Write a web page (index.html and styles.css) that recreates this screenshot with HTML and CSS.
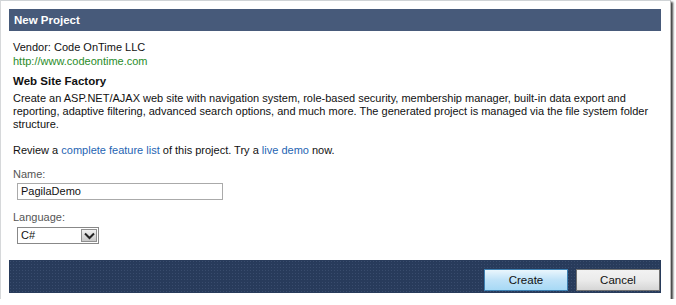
FILE: index.html
```html
<!DOCTYPE html>
<html>
<head>
<meta charset="utf-8">
<link rel="stylesheet" href="styles.css">
</head>
<body>
<div class="frame">
  <div class="titlebar">New Project</div>
  <div class="content">
    <div class="vendor">Vendor: Code OnTime LLC</div>
    <div class="url">http://www.codeontime.com</div>
    <div class="heading">Web Site Factory</div>
    <p class="desc">Create an ASP.NET/AJAX web site with navigation system, role-based security, membership manager, built-in data export and reporting, adaptive filtering, advanced search options, and much more. The generated project is managed via the file system folder structure.</p>
    <p class="review">Review a <span class="link">complete feature list</span> of this project. Try a <span class="link">live demo</span> now.</p>
    <div class="field">
      <div class="label">Name:</div>
      <div class="input">PagilaDemo</div>
    </div>
    <div class="field field-lang">
      <div class="label">Language:</div>
      <div class="select"><span class="sel-text">C#</span><span class="sel-btn"><svg width="11" height="8" viewBox="0 0 11 8"><path d="M1 1.5 L5.5 6 L10 1.5" fill="none" stroke="#222" stroke-width="2"/></svg></span></div>
    </div>
  </div>
  <div class="footer">
    <div class="btn btn-create">Create</div>
    <div class="btn btn-cancel">Cancel</div>
  </div>
</div>
</body>
</html>
```
FILE: styles.css
```css
html, body { margin: 0; padding: 0; background: #fff; }
body { font-family: Tahoma, "Liberation Sans", Arial, sans-serif; font-size: 11px; color: #111; }
.frame {
  width: 652px;
  border-top: 1px solid #cfd3d6;
  border-left: 1px solid #d6d8da;
  border-right: 1px solid #bbb;
  padding: 8px 9px 6px 8px;
  box-shadow: 2px 2px 2px rgba(0,0,0,0.75);
  background: #fff;
}
.titlebar {
  height: 22px;
  background: #475a7a;
  color: #fff;
  font-weight: bold;
  font-size: 11.5px;
  line-height: 22px;
  padding-left: 5px;
}
.content { padding: 9px 4px 0 4px; }
.vendor { line-height: 14px; }
.url { color: #2a8c2a; line-height: 14px; }
.heading { font-weight: bold; font-size: 11.5px; margin-top: 6px; line-height: 14px; }
.desc { margin: 4px 0 0 0; line-height: 13px; }
.review { margin: 13px 0 0 0; line-height: 13px; }
.link { color: #1f65b3; }
.field { margin-top: 11px; }
.label { color: #555; line-height: 13px; }
.input {
  margin-top: 2px;
  margin-left: 4px;
  width: 201px;
  height: 15px;
  border: 1px solid #aaa;
  line-height: 15px;
  padding-left: 3px;
  box-sizing: content-box;
}
.field-lang .label { margin-bottom: 3px; }
.select {
  margin-left: 4px;
  width: 80px;
  height: 15px;
  border: 1px solid #888;
  display: flex;
}
.sel-text { flex: 1; padding-left: 3px; line-height: 15px; }
.sel-btn {
  width: 16px;
  height: 13px;
  margin: 1px;
  background: linear-gradient(#f0f0f0, #c8c8c8);
  border: 1px solid #8f8f8f;
  box-sizing: border-box;
  display: flex; align-items: center; justify-content: center;
}
.footer {
  margin-top: 16px;
  height: 33px;
  background-color: #283b5b;
  background-image: radial-gradient(circle, rgba(90,110,145,0.35) 0.8px, transparent 1px);
  background-size: 3px 3px;
  display: flex;
  justify-content: flex-end;
  align-items: flex-end;
  gap: 8px;
  padding: 0 1px 2px 0;
  box-sizing: border-box;
}
.btn {
  width: 82px;
  height: 20px;
  line-height: 20px;
  text-align: center;
  font-size: 11.5px;
  color: #111;
  border: 1px solid #6d7a8c;
}
.btn-create { background: linear-gradient(#eaf6fd, #bfe2f8 50%, #a7d9f5); border-color: #3c7fb1; }
.btn-cancel { background: linear-gradient(#f2f2f2, #ebebeb 50%, #d6d6d6); border-color: #707070; }
```
